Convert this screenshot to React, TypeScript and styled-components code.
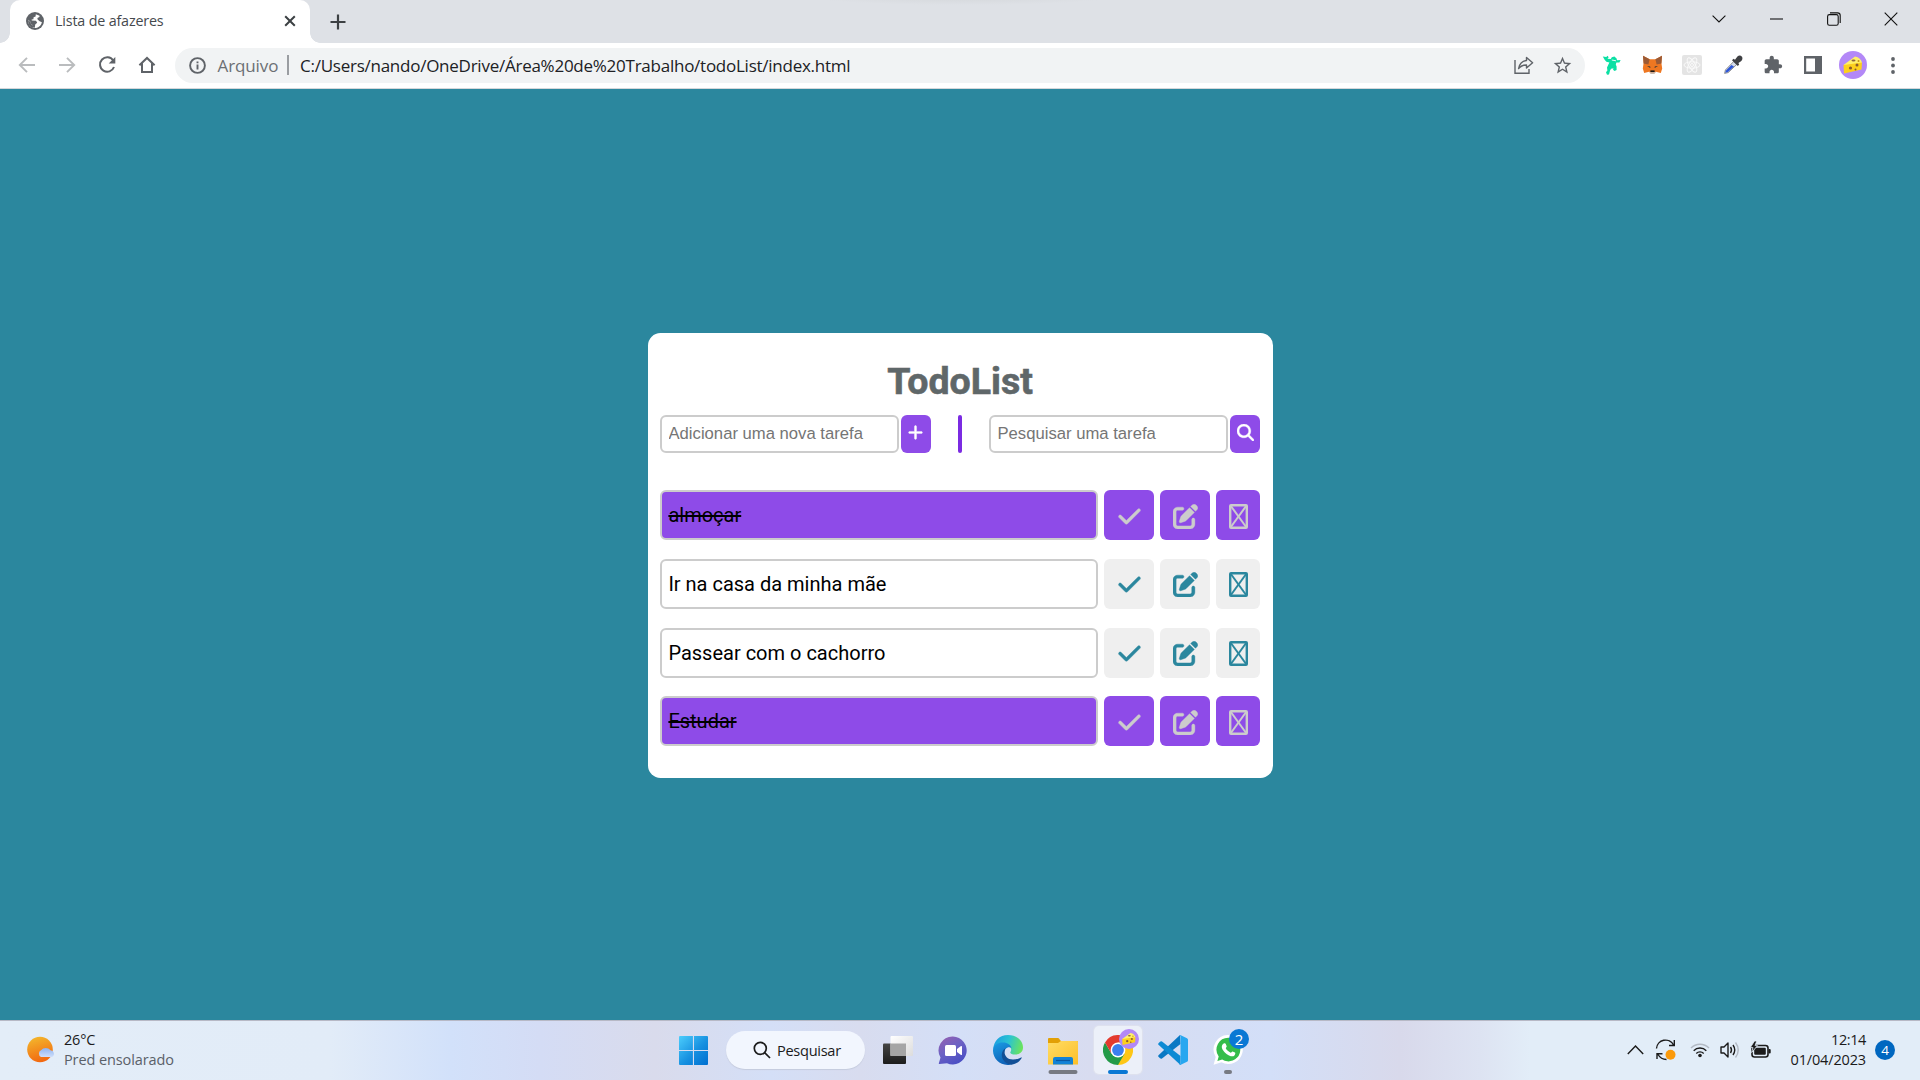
import React from "react";
import styled, { createGlobalStyle } from "styled-components";
import { FaCheck, FaPenToSquare, FaMagnifyingGlass, FaPlus } from "react-icons/fa6";

const GlobalStyle = createGlobalStyle`
  *, *::before, *::after { box-sizing: border-box; }
  body { margin: 0; overflow: hidden; }
`;

const uiFont = `"Segoe UI", "Open Sans", "Noto Sans", sans-serif`;

const Screen = styled.div`
  width: 1920px;
  height: 1080px;
  display: flex;
  flex-direction: column;
  font-family: ${uiFont};
  svg { display: block; flex: none; }
`;

/* ---------- browser chrome ---------- */

const TabStrip = styled.div`
  height: 43px;
  display: flex;
  padding-left: 10px;
  background: radial-gradient(ellipse 150px 8px at 962px -3px, #d8dbdf 40%, #dee1e6 100%) #dee1e6;
`;

const Tab = styled.div`
  position: relative;
  width: 300px;
  height: 43px;
  display: flex;
  align-items: center;
  padding: 0 12px 1px 16px;
  background: #fff;
  border-radius: 10px 10px 0 0;
  &::before, &::after {
    content: "";
    position: absolute;
    bottom: 0;
    width: 10px;
    height: 10px;
  }
  &::before { left: -10px; background: radial-gradient(circle at 0 0, transparent 9.5px, #fff 10px); }
  &::after { right: -10px; background: radial-gradient(circle at 100% 0, transparent 9.5px, #fff 10px); }
`;

const TabTitle = styled.span`
  flex: 1;
  margin-left: 11px;
  font-size: 14.3px;
  letter-spacing: -0.16px;
  line-height: 20px;
  color: #45494d;
  white-space: nowrap;
`;

const NewTab = styled.div`
  width: 40px;
  height: 43px;
  margin-left: 7.5px;
  display: flex;
  align-items: center;
  justify-content: center;
`;

const WindowControls = styled.div`
  display: flex;
  margin-left: auto;
  height: 37px;
`;

const ControlSlot = styled.div`
  width: 57.5px;
  display: flex;
  align-items: center;
  justify-content: center;
`;

const Toolbar = styled.div`
  height: 46px;
  display: flex;
  align-items: center;
  padding: 0 8px 1px 7px;
  background: #fff;
  border-bottom: 1px solid #d5d7da;
`;

const ToolSlot = styled.div<{ $w?: number }>`
  width: ${(p) => p.$w ?? 40}px;
  height: 40px;
  flex: none;
  display: flex;
  align-items: center;
  justify-content: center;
`;

const AddressBar = styled.div`
  flex: 1;
  height: 35px;
  margin: 0 7px 0 8px;
  padding: 0 3px 0 2px;
  display: flex;
  align-items: center;
  border-radius: 18px;
  background: #f1f3f4;
  font-size: 17px;
  line-height: 24px;
  white-space: nowrap;
`;

const Scheme = styled.span`
  width: 70px;
  padding: 1px 0 0 0.5px;
  color: #6b6f73;
  letter-spacing: -0.1px;
`;

const SchemeRule = styled.span`
  width: 2px;
  height: 20px;
  margin-right: 11px;
  background: #9a9da1;
`;

const Url = styled.span`
  flex: 1;
  padding-top: 1px;
  color: #202124;
  letter-spacing: -0.25px;
`;

/* ---------- page ---------- */

const Page = styled.main`
  flex: 1;
  display: flex;
  align-items: center;
  justify-content: center;
  padding: 2px 1px 0 2px;
  background: #2b879e;
`;

const Card = styled.section`
  width: 625px;
  height: 445px;
  padding: 24px 13px 0 12px;
  border-radius: 12.5px;
  background: #fff;
  font-family: Roboto, sans-serif;
`;

const Title = styled.h1`
  margin: 0 0 8px;
  height: 50px;
  line-height: 49px;
  font-size: 37.5px;
  font-weight: 700;
  -webkit-text-stroke: 0.6px #5f6769;
  text-align: center;
  color: #5f6769;
`;

const Forms = styled.div`
  display: flex;
  justify-content: space-between;
  height: 38px;
  margin-bottom: 37px;
`;

const Form = styled.form`
  display: flex;
  gap: 2px;
`;

const TextInput = styled.input`
  width: 239px;
  height: 38px;
  padding: 0 6px 0 6.5px;
  border: 2px solid #ccc;
  border-radius: 6px;
  outline: none;
  font-family: "Liberation Sans", Arial, sans-serif;
  font-size: 16.67px;
  &::placeholder { color: #757575; opacity: 1; }
`;

const FormButton = styled.button<{ $shift?: number }>`
  width: 30px;
  height: 38px;
  padding: 0 ${(p) => p.$shift ?? 0}px 3px 0;
  display: flex;
  align-items: center;
  justify-content: center;
  border: 0;
  border-radius: 6px;
  background: #8e4be8;
  color: #fff;
  font-size: 17px;
  path { stroke: currentColor; stroke-width: 10px; }
`;

const Divider = styled.div`
  width: 4px;
  border-radius: 2px;
  background: #7b2be2;
`;

const List = styled.ul`
  margin: 0;
  padding: 0;
  list-style: none;
  display: flex;
  flex-direction: column;
  gap: 18.75px;
`;

const Item = styled.li<{ $done?: boolean }>`
  display: grid;
  grid-template-columns: 438px 50px 50px 44px;
  gap: 6px;
  height: 50px;
  --fill: ${(p) => (p.$done ? "#8e4be8" : "#efefef")};
  --ink: ${(p) => (p.$done ? "#ccc" : "#2b879e")};
  --drop: ${(p) => (p.$done ? "3px" : "2px")};
`;

const TaskName = styled.div<{ $done?: boolean }>`
  border: 2px solid #ccc;
  border-radius: 6px;
  padding: 0 6.4px;
  line-height: 46px;
  font-size: 20px;
  color: #000;
  background: ${(p) => (p.$done ? "#8e4be8" : "#fff")};
  text-decoration: ${(p) => (p.$done ? "line-through" : "none")};
`;

const ActionButton = styled.button`
  display: flex;
  align-items: center;
  justify-content: center;
  padding: var(--drop) 0 0;
  border: 0;
  border-radius: 6px;
  background: var(--fill);
  color: var(--ink);
  font-size: 25px;
  path { stroke: currentColor; stroke-width: 8px; }
`;

/* ---------- taskbar ---------- */

const Taskbar = styled.footer`
  height: 60px;
  display: grid;
  grid-template-columns: 666px auto 1fr;
  border-top: 1px solid #b7b9c6;
  background: linear-gradient(90deg, #e3edf8 0, #e2ecf8 330px, #d2e1fa 450px, #d4dcf5 540px,
    #d9dbec 655px, #d4dff7 770px, #d8dcef 860px, #d4dff7 960px, #d8dcf0 1090px, #d3dff8 1270px,
    #d8d9eb 1400px, #dde3f2 1480px, #e2edf8 1530px, #e2edf8 1920px);
`;

const Weather = styled.div`
  display: flex;
  align-items: center;
  padding: 0 0 2px 26px;
  gap: 8px;
`;

const Lines = styled.div<{ $right?: boolean }>`
  display: flex;
  flex-direction: column;
  font-size: 14.5px;
  line-height: 20px;
  color: #1b1b1b;
  text-align: ${(p) => (p.$right ? "right" : "left")};
  white-space: nowrap;
`;

const Line = styled.span<{ $track?: number; $dim?: boolean }>`
  letter-spacing: ${(p) => p.$track ?? 0}px;
  color: ${(p) => (p.$dim ? "#5a6069" : "#1b1b1b")};
`;

const Dock = styled.div`
  display: flex;
  align-items: center;
`;

const DockSlot = styled.div`
  position: relative;
  width: 55px;
  height: 59px;
  display: flex;
  align-items: center;
  justify-content: center;
  padding-bottom: 1px;
`;

const ActiveTile = styled.div`
  width: 48px;
  height: 48px;
  display: flex;
  align-items: center;
  justify-content: center;
  border-radius: 5px;
  background: #ecf0f9;
  box-shadow: 0 0 1px 1px #dfe2ee;
`;

const Running = styled.span<{ $w: number; $active?: boolean }>`
  position: absolute;
  bottom: 6px;
  left: 50%;
  width: ${(p) => p.$w}px;
  height: 4px;
  border-radius: 2px;
  transform: translateX(-50%);
  background: ${(p) => (p.$active ? "#0a78d4" : "#777a82")};
`;

const SearchPill = styled.div`
  width: 139px;
  height: 38px;
  margin: 0 5px 1px;
  padding: 0 0 0 27px;
  display: flex;
  align-items: center;
  gap: 6px;
  border-radius: 19px;
  background: #f2f6fe;
  box-shadow: 0 1px 1px #c5cbdd;
  font-size: 14.6px;
  letter-spacing: -0.3px;
  color: #1b1b1b;
`;

const Badge = styled.span<{ $floating?: boolean }>`
  width: 20px;
  height: 20px;
  border-radius: 50%;
  display: flex;
  align-items: center;
  justify-content: center;
  background: ${(p) => (p.$floating ? "#0a78d4" : "#0067c0")};
  color: #fff;
  font-size: ${(p) => (p.$floating ? 15 : 13.5)}px;
  line-height: 20px;
  ${(p) => p.$floating && "position: absolute; top: 8px; left: 29px;"}
`;

const BadgePicture = styled.span`
  position: absolute;
  top: 8px;
  left: 28.5px;
`;

const Tray = styled.div`
  display: flex;
  align-items: center;
  justify-content: flex-end;
  padding: 0 25px 2px 0;
`;

const TrayIcons = styled.div`
  display: flex;
  align-items: center;
  margin-right: 20px;
  gap: 10px;
`;

const SyncIcon = styled.svg`
  margin: 0 3px 0 1px;
`;

/* ---------- drawings ---------- */

const Globe = () => (
  <svg width="18" height="18" viewBox="0 0 18 18">
    <circle cx="9" cy="9" r="9" fill="#5f6368" />
    <path d="M9.8 2.2 L9.6 4.4 L7.6 5.2 L7.4 7.2 L5.6 7.5 L5.8 8.6 L10 8.8 L11.2 10.8 L9.2 12.4 L8.8 15.8 L6.8 15.6 L6.8 13.2 L4.8 11.8 L4.2 9.6 L2.1 7.8 C2 11 3.2 14.6 7.4 15.9 C11 16.6 15 14.4 15.9 10.2 L13.6 9.2 L11.6 7.6 L11.4 6 L13.4 5 L13.6 3.7 Z" fill="#fff" />
    <path d="M2.2 8 L4.4 10 L5 12 L7 13.4 L7 15.8 C4 15.2 1.8 12 2.2 8Z" fill="#5f6368" />
  </svg>
);

const Cheese = ({ size }: { size: number }) => (
  <svg width={size} height={size} viewBox="0 0 28 28">
    <circle cx="14" cy="14" r="14" fill="#b388f7" />
    <path d="M4.5 14 L16 5.5 Q22 6.5 23 12 L7 15.5Z" fill="#fff06a" />
    <path d="M4.5 14 L23 11.5 L22.5 18.5 L5 22.5Z" fill="#fdd01c" />
    <ellipse cx="14.5" cy="9.5" rx="2" ry="1" fill="#8b6440" />
    <circle cx="19.5" cy="10" r="1" fill="#c79316" />
    <circle cx="11.5" cy="17" r="1.6" fill="#8a5a2d" />
    <circle cx="18" cy="14" r="1.5" fill="#8a5a2d" />
    <circle cx="16.5" cy="18.5" r="1" fill="#8a5a2d" />
  </svg>
);

const Bird = () => (
  <svg width="20" height="20" viewBox="0 0 20 20" fill="#0be0a4">
    <path d="M.8 1.6 L4.2 2 L5.8 .8 L6.6 2.6 L5.4 3.8 L8.8 4 L9.8 2.2 L12.4 1.6 L14.6 3.4 L15 5.2 L18.6 5 L17.4 7.4 L14.4 7.4 L13.8 9.4 L14.6 11.6 L14.6 15 L12.6 16 L11 14.8 L11.6 13.4 L9.6 13.4 L8.2 15 L7 19.4 L5 19.8 L4 17.2 L5.4 15.6 L5 12.4 L6.4 9.4 L7.4 7.4 L4.4 6.8 L2.6 4.8Z" />
    <path d="M9.8 5 L14 5.8" stroke="#fff" strokeWidth=".9" />
  </svg>
);

const Fox = () => (
  <svg width="21" height="20" viewBox="0 0 21 20">
    <path d="M1 .8 L7.6 4.2 H13.4 L20 .8 L19.4 8.2 L20.2 13.6 L18.8 18 L14 16.8 L12 18.6 H9 L7 16.8 L2.2 18 L.8 13.6 L1.6 8.2Z" fill="#ee7721" />
    <path d="M1 .8 L7.6 4.2 L6.4 9.4 L1.6 8.6Z M20 .8 L13.4 4.2 L14.6 9.4 L19.4 8.6Z" fill="#9b5a35" />
    <path d="M5 11 L8.2 11.4 L8.4 13Z M16 11 L12.8 11.4 L12.6 13Z" fill="#23303c" />
    <path d="M8.4 15.4 H12.6 V17 H8.4Z" fill="#171717" />
    <path d="M7.2 16.6 L9 17.2 H12 L13.8 16.6 L12.4 19 H8.6Z" fill="#c9bcb2" />
  </svg>
);

const ReactOff = () => (
  <svg width="20" height="20" viewBox="0 0 20 20" fill="none" stroke="#fafafa" strokeWidth="1">
    <rect width="20" height="20" rx="2" fill="#e4e4e4" stroke="none" />
    <ellipse cx="10" cy="10" rx="8" ry="3.2" />
    <ellipse cx="10" cy="10" rx="8" ry="3.2" transform="rotate(60 10 10)" />
    <ellipse cx="10" cy="10" rx="8" ry="3.2" transform="rotate(120 10 10)" />
    <circle cx="10" cy="10" r="1.5" />
  </svg>
);

const Dropper = () => (
  <svg width="20" height="20" viewBox="0 0 20 20">
    <path d="M1.6 18.4 L2.4 15 L10.8 6.4 L13.8 9.4 L5.2 17.6Z" fill="#d5dcea" stroke="#777" strokeWidth=".8" />
    <path d="M2.2 17.8 L3 15.4 L8.4 10 L11 11.4 L5 17Z" fill="#2c55d8" />
    <path d="M9 5.2 L10.6 3.8 L12 4.8 L14.4 1.4 Q17 -.4 19 1.8 Q20.2 4.2 18 6.2 L15.4 8 L16.2 9.6 L14.8 11Z" fill="#3f4043" />
  </svg>
);

const Puzzle = () => (
  <svg width="20" height="20" viewBox="0 0 24 24" fill="#5f6368">
    <path d="M20.5 11H19V7c0-1.1-.9-2-2-2h-4V3.5C13 2.12 11.88 1 10.5 1S8 2.12 8 3.5V5H4c-1.1 0-1.99.9-1.99 2v3.8H3.5c1.49 0 2.7 1.21 2.7 2.7s-1.21 2.7-2.7 2.7H2V20c0 1.1.9 2 2 2h3.8v-1.5c0-1.49 1.21-2.7 2.7-2.7s2.7 1.21 2.7 2.7V22H17c1.1 0 2-.9 2-2v-4h1.5c1.38 0 2.5-1.12 2.5-2.5S21.88 11 20.5 11z" />
  </svg>
);

const WindowsLogo = () => (
  <svg width="29" height="29" viewBox="0 0 29 29">
    <defs>
      <linearGradient id="win" gradientUnits="userSpaceOnUse" x1="0" y1="0" x2="29" y2="29">
        <stop offset="0" stopColor="#4ccdfc" />
        <stop offset=".55" stopColor="#1690e0" />
        <stop offset="1" stopColor="#006fd0" />
      </linearGradient>
    </defs>
    <path fill="url(#win)" d="M1 0H13.9V13.9H0V1Q0 0 1 0ZM15 0H28Q29 0 29 1V13.9H15ZM0 15H13.9V29H1Q0 29 0 28ZM15 15H29V28Q29 29 28 29H15Z" />
  </svg>
);

const TaskView = () => (
  <svg width="30" height="28" viewBox="0 0 30 28">
    <defs>
      <linearGradient id="tvd" x1="0" y1="0" x2="0" y2="1"><stop offset="0" stopColor="#454545" /><stop offset="1" stopColor="#1c1c1c" /></linearGradient>
      <linearGradient id="tvl" x1="0" y1="0" x2="1" y2="1"><stop offset="0" stopColor="#fff" /><stop offset="1" stopColor="#dcdcdc" /></linearGradient>
    </defs>
    <rect y="7.5" width="23" height="20.5" rx="1" fill="url(#tvd)" />
    <rect x="7.5" width="22.5" height="20" rx="1" fill="url(#tvl)" />
    <rect x="7.5" y="7.5" width="15.5" height="12.5" fill="#a5a5a5" />
  </svg>
);

const Chat = () => (
  <svg width="30" height="29" viewBox="0 0 30 29">
    <defs>
      <linearGradient id="chat" x1="0" y1="0" x2=".6" y2="1"><stop offset="0" stopColor="#9a5fae" /><stop offset=".5" stopColor="#6d62c4" /><stop offset="1" stopColor="#4b4fc4" /></linearGradient>
    </defs>
    <path d="M15 .5A14 14 0 1 1 9 27.3L1.5 28Q.5 28 .9 27L2.5 21.5A14 14 0 0 1 15 .5Z" fill="url(#chat)" />
    <rect x="7" y="9" width="11" height="11" rx="1.5" fill="#fff" />
    <path d="M19 13 L23 10Q24 9.6 24 10.8V18.2Q24 19.4 23 19L19 16Z" fill="#fff" />
  </svg>
);

const Edge = () => (
  <svg width="30" height="30" viewBox="0 0 30 30">
    <defs>
      <linearGradient id="e1" x1="0" y1=".3" x2="1" y2=".5"><stop offset="0" stopColor="#1b9de2" /><stop offset=".5" stopColor="#2bc3d2" /><stop offset="1" stopColor="#6be45c" /></linearGradient>
      <linearGradient id="e2" x1="0" y1="0" x2=".4" y2="1"><stop offset="0" stopColor="#1a9ce4" /><stop offset="1" stopColor="#0f62b8" /></linearGradient>
    </defs>
    <path d="M15 0C24 0 30 6 30 12.5C30 17 26.5 19.5 22.5 19.5C19 19.5 17 18.3 17.3 17.2C19.5 14.5 17.5 9.5 12 9C6 8.5 1 12 .2 14.5C.5 6 6.5 0 15 0Z" fill="url(#e1)" />
    <path d="M0 15C.5 10 5 7.4 10 7.5C14.5 7.5 18 10 18.5 13C15 11 11 14 11 19C11 24 15 28 20.5 28C18.5 29.5 16.5 30 14.5 30C6 30 -.3 23 0 15Z" fill="url(#e2)" />
    <path d="M12.5 13.2C10 18 12.5 24.5 20 24.5C24 24.5 26.5 23.3 28 22.5Q29.2 22 28.4 23.4C26 27 22.5 29.3 18.5 29.8C12 29 8.5 24 8.8 19.5C9 16.5 10.5 14.5 12.5 13.2Z" fill="#124f96" />
  </svg>
);

const FolderSvg = styled.svg`
  margin-top: 2px;
`;

const Folder = () => (
  <FolderSvg width="30" height="27" viewBox="0 0 30 27">
    <defs><linearGradient id="fold" x1="0" y1="0" x2="1" y2="1"><stop offset="0" stopColor="#ffdc65" /><stop offset="1" stopColor="#fcbf28" /></linearGradient></defs>
    <path d="M1 0H10Q11 0 12 2L13 3H29Q30 3 30 4V12H0V1Q0 0 1 0Z" fill="#e2a006" />
    <path d="M0 5H10L13 3H29Q30 3 30 4V26.5H0Z" fill="url(#fold)" />
    <path d="M5 26.5V21Q5 19 7 19H23Q25 19 25 21V26.5Z" fill="#1282d6" />
    <path d="M8 22.5H22" stroke="#0b57a0" strokeWidth="1.2" />
  </FolderSvg>
);

const Chrome = () => (
  <svg width="30" height="30" viewBox="0 0 30 30">
    <path d="M15 15V7.5H28A15 15 0 0 1 15 30Z" fill="#fdc616" />
    <path d="M15 15 L21.5 18.8 L15 30A15 15 0 0 1 2 7.5L8.5 18.8Z" fill="#239a48" />
    <path d="M2 7.5A15 15 0 0 1 28 7.5H15L8.5 18.8Z" fill="#e33b2e" />
    <circle cx="15" cy="15" r="7.4" fill="#fff" />
    <circle cx="15" cy="15" r="5.9" fill="#3b7fee" />
  </svg>
);

const VSCode = () => (
  <svg width="30" height="30" viewBox="0 0 30 30">
    <path d="M22 0 L22.5 9 L4 23.5Q3 24 2 23.2L.5 21.8Q-.2 21 .5 20.2Z" fill="#0a78c4" />
    <path d="M.5 9.8Q-.2 9 .5 8.2L2 6.8Q3 6 4 6.6L22.5 21V30Z" fill="#0d8ad4" />
    <path d="M21.5 .3Q22 -.1 22.8 .2L29 3.2Q30 3.7 30 4.8V25.2Q30 26.3 29 26.8L22.8 29.8Q21.8 30.2 21 29.4Q22.5 29.8 22.5 28V2Q22.5 .2 21.5 .3Z" fill="#28a7f0" />
  </svg>
);

const WhatsApp = () => (
  <svg width="30" height="30" viewBox="0 0 30 30">
    <path d="M15.5 0A14.5 14.5 0 1 1 8.5 27.3L.6 29.7 2.7 22A14.5 14.5 0 0 1 15.5 0Z" fill="#fff" />
    <path d="M15.5 2.8A11.8 11.8 0 1 1 9.2 24.6L4.4 26 5.7 21.4A11.8 11.8 0 0 1 15.5 2.8Z" fill="#35bd4b" />
    <path d="M11.3 8.2C12 8 12.5 8.2 12.8 9L13.7 11.2C13.9 11.8 12.7 12.9 12.8 13.3C13.8 15.3 15.5 16.8 17.7 17.7C18.2 17.8 19 16.2 19.6 16.4L22 17.6C22.6 18 22.3 19.8 21.2 20.7C20 21.6 18.3 21.4 16 20.4C12.8 19 9.3 15.4 8.8 12.3C8.6 10.5 9.8 8.6 11.3 8.2Z" fill="#fff" />
  </svg>
);

const SunCloud = () => (
  <svg width="30" height="28" viewBox="0 0 30 28">
    <defs>
      <linearGradient id="sun" x1=".3" y1="0" x2=".6" y2="1"><stop offset="0" stopColor="#f3b62c" /><stop offset="1" stopColor="#f2650f" /></linearGradient>
      <linearGradient id="cld" x1="0" y1="0" x2="0" y2="1"><stop offset="0" stopColor="#8fb4f0" /><stop offset="1" stopColor="#cfdefa" /></linearGradient>
    </defs>
    <circle cx="14" cy="13.5" r="12.8" fill="url(#sun)" />
    <path d="M15 21A3.8 3.8 0 0 1 15 14.2A6 5.5 0 0 1 24.5 14.2A3.6 3.6 0 0 1 26 21Z" fill="url(#cld)" />
  </svg>
);

const MissingGlyph = () => (
  <svg width="19" height="25" viewBox="0 0 19 25" fill="none" stroke="currentColor">
    <rect x="1.2" y="1.2" width="16.6" height="22.6" rx=".8" strokeWidth="2.4" />
    <line x1="1.5" y1="1.5" x2="17.5" y2="23.5" strokeWidth="2" />
    <line x1="17.5" y1="1.5" x2="1.5" y2="23.5" strokeWidth="2" />
  </svg>
);

/* ---------- composition ---------- */

const tasks = [
  { name: "almoçar", done: true },
  { name: "Ir na casa da minha mãe", done: false },
  { name: "Passear com o cachorro", done: false },
  { name: "Estudar", done: true },
];

const BrowserTabs = () => (
  <TabStrip>
    <Tab>
      <Globe />
      <TabTitle>Lista de afazeres</TabTitle>
      <svg width="16" height="16" viewBox="0 0 16 16" stroke="#3c4043" strokeWidth="2"><path d="M3.2 3.2l9.6 9.6M12.8 3.2l-9.6 9.6" /></svg>
    </Tab>
    <NewTab>
      <svg width="16" height="16" viewBox="0 0 16 16" stroke="#3c4043" strokeWidth="2.2"><path d="M8 .5v15M.5 8h15" /></svg>
    </NewTab>
    <WindowControls>
      <ControlSlot><svg width="14" height="8" viewBox="0 0 14 8" fill="none" stroke="#111" strokeWidth="1.1"><path d="M.6 .6L7 7L13.4 .6" /></svg></ControlSlot>
      <ControlSlot><svg width="13" height="2" viewBox="0 0 13 2"><rect y=".5" width="13" height="1" fill="#000" /></svg></ControlSlot>
      <ControlSlot><svg width="14" height="14" viewBox="0 0 14 14" fill="none" stroke="#111" strokeWidth="1.1"><rect x=".6" y="2.6" width="10.6" height="10.6" rx="1.8" /><path d="M3 .9H10.5Q13.2 .9 13.2 3.6V11" /></svg></ControlSlot>
      <ControlSlot><svg width="14" height="14" viewBox="0 0 14 14" stroke="#111" strokeWidth="1.1"><path d="M.7 .7L13.3 13.3M13.3 .7L.7 13.3" /></svg></ControlSlot>
    </WindowControls>
  </TabStrip>
);

const BrowserToolbar = () => (
  <Toolbar>
    <ToolSlot><svg width="18" height="16" viewBox="0 0 18 16" fill="none" stroke="#babcbe" strokeWidth="1.9"><path d="M17 8H2M9 .8L1.8 8L9 15.2" /></svg></ToolSlot>
    <ToolSlot><svg width="18" height="16" viewBox="0 0 18 16" fill="none" stroke="#babcbe" strokeWidth="1.9"><path d="M1 8H16M9 .8L16.2 8L9 15.2" /></svg></ToolSlot>
    <ToolSlot><svg width="18" height="18" viewBox="0 0 18 18" fill="none" stroke="#5f6368" strokeWidth="2"><path d="M15.2 4.5A7.2 7.2 0 1 0 16 11" /><path d="M17.3 1V7.6H10.7Z" fill="#5f6368" stroke="none" /></svg></ToolSlot>
    <ToolSlot><svg width="18" height="18" viewBox="0 0 18 18" fill="none" stroke="#5f6368" strokeWidth="2"><path d="M1.4 9.2L9 2L16.6 9.2M4 7.5V16H14V7.5" /></svg></ToolSlot>
    <AddressBar>
      <ToolSlot>
        <svg width="17" height="17" viewBox="0 0 17 17" fill="none" stroke="#5f6368" strokeWidth="1.9"><circle cx="8.5" cy="8.5" r="7.4" /><path d="M8.5 7.6V12.5M8.5 4.4V6.2" /></svg>
      </ToolSlot>
      <Scheme>Arquivo</Scheme>
      <SchemeRule />
      <Url>C:/Users/nando/OneDrive/Área%20de%20Trabalho/todoList/index.html</Url>
      <ToolSlot $w={39}>
        <svg width="20" height="18" viewBox="0 0 20 18" fill="none" stroke="#5f6368" strokeWidth="1.4"><path d="M1 4V17.2H15V13" /><path d="M12.5 1.4L18.6 6.8L12.5 12V9C9 9 6.6 10 4.6 12.6C5.4 8.5 8 5 12.5 4.5Z" strokeLinejoin="round" /></svg>
      </ToolSlot>
      <ToolSlot $w={39}>
        <svg width="21" height="21" viewBox="0 0 24 24" fill="#5f6368"><path d="M22 9.24l-7.19-.62L12 2 9.19 8.63 2 9.24l5.46 4.73L5.82 21 12 17.27 18.18 21l-1.63-7.03L22 9.24zM12 15.4l-3.76 2.27 1-4.28-3.32-2.88 4.38-.38L12 6.1l1.71 4.04 4.38.38-3.32 2.88 1 4.28L12 15.4z" /></svg>
      </ToolSlot>
    </AddressBar>
    <ToolSlot><Bird /></ToolSlot>
    <ToolSlot><Fox /></ToolSlot>
    <ToolSlot><ReactOff /></ToolSlot>
    <ToolSlot $w={41}><Dropper /></ToolSlot>
    <ToolSlot><Puzzle /></ToolSlot>
    <ToolSlot><svg width="18" height="18" viewBox="0 0 18 18"><path fillRule="evenodd" fill="#5f6368" d="M0 0H18V18H0ZM2.2 2.5V15.5H11V2.5Z" /></svg></ToolSlot>
    <ToolSlot><Cheese size={28} /></ToolSlot>
    <ToolSlot $w={39}><svg width="4" height="17" viewBox="0 0 4 17" fill="#5f6368"><circle cx="2" cy="2" r="1.9" /><circle cx="2" cy="8.5" r="1.9" /><circle cx="2" cy="15" r="1.9" /></svg></ToolSlot>
  </Toolbar>
);

const TodoCard = () => (
  <Card>
    <Title>TodoList</Title>
    <Forms>
      <Form>
        <TextInput placeholder="Adicionar uma nova tarefa" />
        <FormButton type="button" $shift={1}><FaPlus /></FormButton>
      </Form>
      <Divider />
      <Form>
        <TextInput placeholder="Pesquisar uma tarefa" />
        <FormButton type="button"><FaMagnifyingGlass /></FormButton>
      </Form>
    </Forms>
    <List>
      {tasks.map((t) => (
        <Item key={t.name} $done={t.done}>
          <TaskName $done={t.done}>{t.name}</TaskName>
          <ActionButton><FaCheck /></ActionButton>
          <ActionButton><FaPenToSquare /></ActionButton>
          <ActionButton><MissingGlyph /></ActionButton>
        </Item>
      ))}
    </List>
  </Card>
);

const TrayBadge = styled(Badge)`
  margin-left: 9px;
`;

const DesktopBar = () => (
  <Taskbar>
    <Weather>
      <SunCloud />
      <Lines>
        <Line $track={-0.2}>26°C</Line>
        <Line $dim $track={-0.1}>Pred ensolarado</Line>
      </Lines>
    </Weather>
    <Dock>
      <DockSlot><WindowsLogo /></DockSlot>
      <SearchPill>
        <svg width="18" height="18" viewBox="0 0 18 18" fill="none" stroke="#1b1b1b" strokeWidth="1.7"><circle cx="7.3" cy="7.3" r="6" /><path d="M11.6 11.6L17 17" /></svg>
        Pesquisar
      </SearchPill>
      <DockSlot><TaskView /></DockSlot>
      <DockSlot><Chat /></DockSlot>
      <DockSlot><Edge /></DockSlot>
      <DockSlot><Folder /><Running $w={29} /></DockSlot>
      <DockSlot>
        <ActiveTile><Chrome /></ActiveTile>
        <BadgePicture><Cheese size={20} /></BadgePicture>
        <Running $w={20} $active />
      </DockSlot>
      <DockSlot><VSCode /></DockSlot>
      <DockSlot><WhatsApp /><Badge $floating>2</Badge><Running $w={8} /></DockSlot>
    </Dock>
    <Tray>
      <TrayIcons>
        <svg width="17" height="10" viewBox="0 0 17 10" fill="none" stroke="#1b1b1b" strokeWidth="1.4"><path d="M.8 9L8.5 1L16.2 9" /></svg>
        <SyncIcon width="22" height="22" viewBox="0 0 22 22" fill="none" stroke="#1b1b1b" strokeWidth="1.4">
          <path d="M1.5 9.5A9 9 0 0 1 18.5 6M19.3 1V6.5H14M2 20V14.8H7.5M3 15.5Q6 20.5 11.5 20.5" />
          <circle cx="15.5" cy="15.8" r="5" fill="#fb9a0b" stroke="none" />
        </SyncIcon>
        <svg width="20" height="16" viewBox="0 0 20 16" fill="none" stroke="#1b1b1b" strokeWidth="1.4">
          <path d="M1 6A12.6 12.6 0 0 1 19 6" stroke="#b3bac4" />
          <path d="M3.7 8.7A8.8 8.8 0 0 1 16.3 8.7M6.3 11.4A5.2 5.2 0 0 1 13.7 11.4" />
          <circle cx="10" cy="13.5" r="1.8" fill="#1b1b1b" stroke="none" />
        </svg>
        <svg width="20" height="18" viewBox="0 0 20 18" fill="none" stroke="#1b1b1b" strokeWidth="1.4">
          <path d="M1 6H4L8 2V16L4 12H1Z" strokeLinejoin="round" />
          <path d="M10.5 6Q12.5 9 10.5 12M13 4Q16.5 9 13 14" />
          <path d="M15.5 1.5Q21 9 15.5 16.5" stroke="#b3bac4" />
        </svg>
        <svg width="21" height="18" viewBox="0 0 21 18">
          <rect x="2" y="4.500" width="16" height="11.5" rx="2.5" fill="none" stroke="#1b1b1b" strokeWidth="1.6" />
          <rect x="4.200" y="6.700" width="11.6" height="7.1" rx="1" fill="#1b1b1b" />
          <rect x="18.5" y="8" width="2.2" height="4.5" rx="1" fill="#1b1b1b" />
          <path d="M4.5 0L.3 6.600H3L1.600 11.500L7.600 4.600H5L6.800 0Z" fill="#1b1b1b" stroke="#e2edf8" strokeWidth=".8" />
        </svg>
      </TrayIcons>
      <Lines $right>
        <Line $track={-0.4}>12:14</Line>
        <Line $track={-0.15}>01/04/2023</Line>
      </Lines>
      <TrayBadge>4</TrayBadge>
    </Tray>
  </Taskbar>
);

export default function App() {
  return (
    <Screen>
      <GlobalStyle />
      <BrowserTabs />
      <BrowserToolbar />
      <Page>
        <TodoCard />
      </Page>
      <DesktopBar />
    </Screen>
  );
}
